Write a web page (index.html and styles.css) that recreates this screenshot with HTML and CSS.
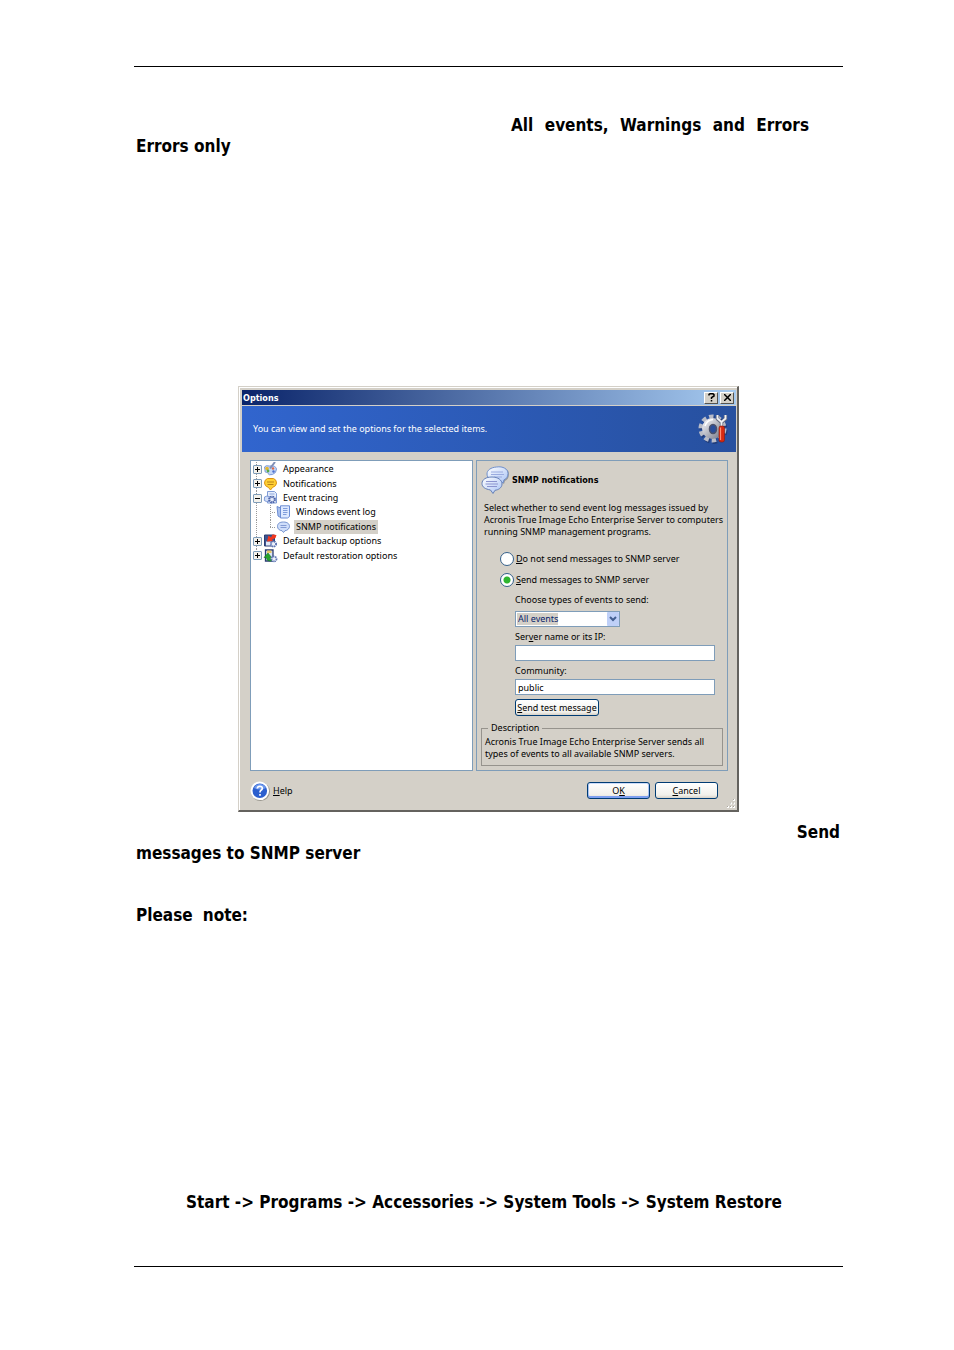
FILE: index.html
```html
<!DOCTYPE html>
<html lang="en">
<head>
<meta charset="utf-8">
<title>Options</title>
<link rel="stylesheet" href="styles.css">
</head>
<body>
<main class="page">
  <section class="intro">
    <p class="line events">All events, Warnings and Errors</p>
    <p class="line">Errors only</p>
  </section>

  <section class="dialog" aria-label="Options">
    <header class="titlebar">
      <h1 class="title">Options</h1>
      <button class="cap" aria-label="What's this?"><svg width="7" height="9" viewBox="0 0 7 9"><path d="M1 2.5V1.5L2 .8H5L6 1.6V3L3.5 4.6V6M3.5 7V8.6" fill="none" stroke="#000" stroke-width="1.5"/></svg></button>
      <button class="cap" aria-label="Close"><svg width="7" height="7" viewBox="0 0 7 7"><path d="M0 0L7 7M7 0L0 7" stroke="#000" stroke-width="1.5"/></svg></button>
    </header>
    <div class="banner">
      <p>You can view and set the options for the selected items.</p>
      <svg width="30" height="32" viewBox="0 0 30 32">
        <defs><linearGradient id="gear" x1="0" y1="0" x2="1" y2="1"><stop offset="0" stop-color="#e6e6ec"/><stop offset="1" stop-color="#858896"/></linearGradient></defs>
        <circle cx="15.500" cy="17" r="11.500" fill="none" stroke="#1c2f61" stroke-width="5" stroke-dasharray="4.300 2.920" opacity=".6"/>
        <circle cx="14.500" cy="15.500" r="11.500" fill="none" stroke="#b9bcc8" stroke-width="5" stroke-dasharray="4.300 2.920"/>
        <circle cx="14.500" cy="15.500" r="7" fill="none" stroke="url(#gear)" stroke-width="7"/>
        <path d="M7 13Q9 7 15 6.500" fill="none" stroke="#fff" stroke-width="1.500"/>
        <ellipse cx="15" cy="16" rx="3.500" ry="4.500" fill="#2a4d9a" stroke="#4d526a" stroke-width="1.500"/>
        <path d="M19.500 2V6L23.500 9.500V14M27.500 2V6L23.500 9.500" fill="none" stroke="#686d80" stroke-width="3.400"/>
        <path d="M19.500 2V5.500L23.500 9V14M27.500 2V5.500L23.500 9" fill="none" stroke="#f1f2f6" stroke-width="1.800"/>
        <rect x="21" y="13" width="5.500" height="16" rx="2" fill="#d72a10" stroke="#8f1608" stroke-width=".6"/>
        <path d="M22.500 14.500V27" stroke="#ff8d72" stroke-width="1.200"/>
      </svg>
    </div>

    <div class="columns">
      <ul class="tree">
        <li class="node"><span class="box plus"></span>
          <svg class="icon" viewBox="0 0 14 14"><path d="M1 5Q2 3 6 4Q12 3 13 7Q13 11 9 12.500Q5 13.500 4.500 11.500Q4.500 10 3 10.500Q1 10.500 1.500 8Z" fill="#c5d7f6" stroke="#7f9bd6"/><circle cx="3.500" cy="6.500" r="1.800" fill="#e6b72d"/><circle cx="4.500" cy="9" r="1.400" fill="#57aa48"/><circle cx="9.500" cy="6.500" r="1.200" fill="#df6542"/><circle cx="10" cy="9.500" r="1.200" fill="#4b6fd0"/><path d="M11.500 0L6.500 6.500" stroke="#7f8fb5" stroke-width="2"/></svg>
          Appearance</li>
        <li class="node"><span class="box plus"></span>
          <svg class="icon" viewBox="0 0 14 14"><path d="M4 1.500H10Q13 2.500 13 6Q13 9 9 10.500L7 13L5 10.500Q1 9 1 6Q1 2.500 4 1.500Z" fill="#ffd034" stroke="#dd9312"/><path d="M3.500 5H10.500M4 7.500H10" stroke="#b98317"/></svg>
          Notifications</li>
        <li class="node"><span class="box"></span>
          <svg class="icon" viewBox="0 0 14 14"><path d="M4 .5H11L13 2.500V12H4Z" fill="#e6eefc" stroke="#7f9bd6"/><path d="M6 3H11" stroke="#91a8dc"/><path d="M1 6Q3 4.500 6 5.500V10Q3 11.500 .8 9.500Z" fill="#cfdcf7" stroke="#7f9bd6"/><circle cx="8.500" cy="8.500" r="2.800" fill="#e3eafa" stroke="#4a62a8" stroke-width="2.200" stroke-dasharray="1.500 .7"/></svg>
          Event tracing</li>
        <li class="node child">
          <svg class="icon" viewBox="0 0 14 14"><path d="M.5 1.500L4 3V12.500L1.500 11Z" fill="#a9c1ef" stroke="#6c8dd3"/><path d="M4 .8H13V11.500L11 13H4Z" fill="#dde9ff" stroke="#6c8dd3"/><path d="M6.500 3.500H11M6.500 5.500H11M6.500 7.500H11M6.500 9.500H10" stroke="#7f9cda"/></svg>
          Windows event log</li>
        <li class="node child last">
          <svg class="icon" viewBox="0 0 14 14"><path d="M7 2C11 2 13 4 13 6.300S11 10.500 8.500 10.700L7 12.500L5.500 10.700C3 10.500 1 9 1 6.300S3 2 7 2Z" fill="#cfdefa" stroke="#7593cf"/><path d="M4 5.500H10M4 7.500H10" stroke="#839bd4"/></svg>
          <span class="selected">SNMP notifications</span></li>
        <li class="node"><span class="box plus"></span>
          <svg class="icon" viewBox="0 0 14 14"><path d="M1 1H11V12H1Z" fill="#3d5490" stroke="#2a3c70"/><path d="M2.500 7.500H8V11.500H2.500Z" fill="#dfe7f6"/><path d="M13 1L9 .5L7.500 3.500L5 1.500L3.500 7.500L9.500 7L8.500 5.500L12 4Z" fill="#f2371d"/><circle cx="10" cy="10" r="2.600" fill="#eef2fb" stroke="#5d74b3" stroke-width="1.900" stroke-dasharray="1.400 .7"/></svg>
          Default backup options</li>
        <li class="node"><span class="box plus"></span>
          <svg class="icon" viewBox="0 0 14 14"><path d="M2 1H9.500V12H2Z" fill="#dce5f5" stroke="#2a3c70" stroke-width="1.300"/><path d="M3.500 1.500H8V4H3.500Z" fill="#e9c865"/><path d="M8 12Q3 12.500 3 8.500H.5L4.500 4L8 8.500H6Q6 10 8 10Z" fill="#25a72b" stroke="#14721b" stroke-width=".6"/><circle cx="10.500" cy="10" r="2.500" fill="#eef2fb" stroke="#5d74b3" stroke-width="1.800" stroke-dasharray="1.400 .7"/></svg>
          Default restoration options</li>
      </ul>

      <form class="panel">
        <div class="heading">
          <svg width="29" height="28" viewBox="0 0 29 28">
            <defs><linearGradient id="bub" x1="0" y1="0" x2="1" y2="1"><stop offset="0" stop-color="#fff"/><stop offset="1" stop-color="#a9c3f5"/></linearGradient></defs>
            <path d="M16 2.500C22 .5 28 3 28 8C28 12 26 14 24 15L23 18L19 15C12 16 7 14 6.500 9C6.500 5 10 2.500 16 2.500Z" fill="#59616f" opacity=".5"/>
            <path d="M15.500 1C22 0 27 3 27 7.500C27 11 25 13 23 13.800L22 17L18.500 14.500C11 15.500 6 12.500 6 8C6 4 10 1.500 15.500 1Z" fill="url(#bub)" stroke="#6f8fcc"/>
            <path d="M10 6H22M10 8.500H23M13 11H21" stroke="#9aabdf"/>
            <path d="M11 11C17 11 21 14 21 18C21 22 17 24 14 24.300L12 27.500L9.500 24C4 23 1 21 1 17.500C1 13.500 5 11 11 11Z" fill="url(#bub)" stroke="#6580b7"/>
            <path d="M5 15.500H16M4.500 18H17M6 20.500H16" stroke="#8c94cf"/>
          </svg>
          <h2 class="title">SNMP notifications</h2>
        </div>
        <p class="lead">Select whether to send event log messages issued by<br>Acronis True Image Echo Enterprise Server to computers<br>running SNMP management programs.</p>
        <label class="choice"><input type="radio" name="send"><span><u>D</u>o not send messages to SNMP server</span></label>
        <label class="choice"><input type="radio" name="send" checked><span><u>S</u>end messages to SNMP server</span></label>
        <div class="fields">
          <label class="caption" for="types">Choose types of events to send:</label>
          <div class="combo">
            <select id="types"><option>All events</option><option>Warnings and Errors</option><option>Errors only</option></select>
            <svg class="arrow" width="12" height="14" viewBox="0 0 12 14"><rect width="12" height="14" rx="1" fill="#bfd0f8"/><path d="M3 5L6 8L9 5" fill="none" stroke="#435f91" stroke-width="2"/></svg>
          </div>
          <label class="caption" for="server">Ser<u>v</u>er name or its IP:</label>
          <input class="text" id="server" type="text">
          <label class="caption" for="community">Community:</label>
          <input class="text" id="community" type="text" value="public">
          <button class="btn test" type="button"><span><u>S</u>end test message</span></button>
        </div>
        <fieldset class="description">
          <legend>Description</legend>
          <p>Acronis True Image Echo Enterprise Server sends all<br>types of events to all available SNMP servers.</p>
        </fieldset>
      </form>
    </div>

    <footer class="actions">
      <a class="help" href="#help">
        <svg width="20" height="20" viewBox="0 0 20 20"><circle cx="10.500" cy="10.500" r="9.500" fill="#9b9890"/><circle cx="9.800" cy="9.800" r="9.300" fill="#fff"/><circle cx="9.800" cy="9.800" r="7.300" fill="#2c5fce"/><path d="M4 7Q6 3 10 3Q14 3 16 7Q10 10 4 7Z" fill="#6d98ec"/><path d="M7.300 7.500Q7.500 5.300 9.800 5.300Q12.500 5.300 12.300 7.300Q12.200 8.500 11 9.300Q10 10 10 11.500M10 13V14.800" fill="none" stroke="#fff" stroke-width="1.700"/></svg>
        <span><u>H</u>elp</span></a>
      <button class="btn ok" type="button"><span>O<u>K</u></span></button>
      <button class="btn" type="button"><span><u>C</u>ancel</span></button>
      <svg class="grip" width="9" height="9" viewBox="0 0 9 9"><path d="M7 0h2v2H7zM4 3.500h2v2H4zM7 3.500h2v2H7zM1 7h2v2H1zM4 7h2v2H4zM7 7h2v2H7z" fill="#fff"/><path d="M7 0h1v1H7zM4 3.500h1v1H4zM7 3.500h1v1H7zM1 7h1v1H1zM4 7h1v1H4zM7 7h1v1H7z" fill="#aaa69d"/></svg>
    </footer>
  </section>

  <section class="notes">
    <p class="line end">Send</p>
    <p class="line">messages to SNMP server</p>
    <p class="line note">Please note:</p>
    <p class="line path">Start -&gt; Programs -&gt; Accessories -&gt; System Tools -&gt; System Restore</p>
  </section>
</main>
</body>
</html>
```
FILE: styles.css
```css
* { box-sizing: border-box; }
body { margin: 0; background: #fff; color: #000; }
p, h1, h2, ul { margin: 0; padding: 0; }
.page {
  margin: 66px 111px 83px 134px;
  border-top: 1px solid #000;
  border-bottom: 1px solid #000;
  font-family: "Noto Sans", sans-serif;
}
.line { font: 700 17px/21px "DejaVu Sans Condensed", "DejaVu Sans", sans-serif; }
.intro { padding: 48px 3px 0 2px; }
.events { width: 298px; margin-left: auto; margin-right: 31px; text-align: justify; text-align-last: justify; white-space: nowrap; }
.notes { padding: 10px 3px 53px 2px; }
.end { text-align: right; }
.note { width: 112px; margin-top: 41px; text-align-last: justify; white-space: nowrap; }
.path { margin-top: 266px; padding-left: 50px; }

.dialog {
  max-width: 501px;
  margin: 229px auto 0;
  border: 1px solid #d4d0c8;
  border-right: 2px solid #64625e;
  border-bottom: 2px solid #64625e;
  background: #d4d0c8;
  box-shadow: inset 1px 1px #fff;
  padding: 3px 1px 0 3px;
  font-size: 9px;
  line-height: 12px;
}
.dialog button, .dialog input, .dialog select { font: inherit; color: #000; }
.title { font: 700 9px/12px "DejaVu Sans Condensed", "DejaVu Sans", sans-serif; }
.titlebar {
  display: flex;
  align-items: center;
  gap: 2px;
  height: 15px;
  padding: 0 2px 0 1px;
  background: linear-gradient(90deg, #0a246a, #a6caf0);
  color: #fff;
}
.titlebar .title { flex: 1; }
.cap {
  display: grid;
  place-items: center;
  width: 14px;
  height: 12px;
  padding: 0;
  background: #d4d0c8;
  border: 1px solid;
  border-color: #fff #55534f #55534f #fff;
}
.banner {
  display: flex;
  align-items: center;
  justify-content: space-between;
  height: 47px;
  margin-top: 1px;
  border-bottom: 1px solid #d4d0c8;
  padding: 0 8px 0 11px;
  background: linear-gradient(90deg, #3165ce, #27509f);
  color: #fff;
}
.columns { display: grid; grid-template-columns: 223fr 252fr; gap: 3px; padding: 7px 8px 0; }
.tree {
  list-style: none;
  background: #fff;
  border: 1px solid #7f9db9;
  padding: 1px 2px 207px;
  display: grid;
  grid-template-rows: repeat(7, 1fr);
}
.node { display: flex; align-items: center; gap: 1px; background: repeating-linear-gradient(#999 0 1px, #fff 1px 2px) 3px 0 / 1px 100% no-repeat; }
.node:last-child { background-size: 1px 50%; }
.icon { width: 15px; height: 14px; margin-right: 4px; flex: none; }
.box {
  width: 9px;
  height: 9px;
  flex: none;
  border: 1px solid #7f9db9;
  border-radius: 1px;
  background: linear-gradient(#000, #000) center / 5px 1px no-repeat, #f4f2ec;
}
.plus { background: linear-gradient(#000, #000) center / 5px 1px no-repeat, linear-gradient(#000, #000) center / 1px 5px no-repeat, #f4f2ec; }
.child { padding-left: 23px; background: repeating-linear-gradient(#999 0 1px, #fff 1px 2px) 3px 0 / 1px 100% no-repeat, repeating-linear-gradient(#999 0 1px, #fff 1px 2px) 17px 0 / 1px 100% no-repeat, repeating-linear-gradient(90deg, #999 0 1px, #fff 1px 2px) 17px 7px / 6px 1px no-repeat; }
.last { background-size: 1px 100%, 1px 50%, 6px 1px; }
.selected { background: #d4d0c8; padding: 1px 2px; margin-left: -2px; }

.panel { border: 1px solid #7f9db9; padding: 5px 4px 4px; }
.heading { display: flex; align-items: center; gap: 2px; }
.lead { padding: 8px 0 0 3px; white-space: nowrap; }
.choice { display: flex; align-items: center; gap: 2px; height: 14px; margin: 14px 0 0 19px; }
.choice + .choice { margin-top: 7px; }
.choice input {
  appearance: none;
  width: 14px;
  height: 14px;
  margin: 0;
  border: 1px solid #34608b;
  border-radius: 50%;
  background: #fff;
}
.choice input:checked { background: radial-gradient(circle, #2fb52f 0 3px, #fff 4px); }
.fields { display: flex; flex-direction: column; align-items: flex-start; padding: 7px 8px 0 34px; }
.caption { height: 12px; margin: 0 0 5px; }
.text, .combo select { border: 1px solid #7f9db9; border-radius: 0; background: #fff; height: 16px; padding: 0 2px; margin: 0; }
.text { width: 100%; margin-bottom: 4px; }
.text + .caption, .combo + .caption { margin-bottom: 2px; }
.combo { display: grid; width: 105px; margin-bottom: 4px; }
.combo > * { grid-area: 1 / 1; }
.dialog .combo select { appearance: none; color: #0a246a; background: linear-gradient(#d4d0c8, #d4d0c8) 1px 1px / 41px 12px no-repeat, #fff; }
.arrow { justify-self: end; align-self: center; margin-right: 1px; pointer-events: none; }
.btn {
  width: 63px;
  height: 17px;
  padding: 0;
  border: 1px solid #003c74;
  border-radius: 3px;
  background: linear-gradient(#fff, #f1f0eb 80%, #d8d2c8);
  white-space: nowrap;
}
.test { width: 84px; }
.ok { box-shadow: inset 0 1px #ccdcfa, inset 0 -2px #7d9ff0, inset 1px 0 #a9c2f2, inset -1px 0 #a9c2f2; }
.description { border: 1px solid #96938d; margin: 6px 0 0; padding: 2px 3px 5px; min-width: 0; white-space: nowrap; }
.description legend { margin-left: 3px; padding: 0 3px; line-height: 12px; }
.actions { display: flex; align-items: center; gap: 5px; height: 39px; padding-left: 8px; }
.help { display: flex; align-items: center; gap: 3px; margin-right: auto; color: #000; text-decoration: none; }
.grip { align-self: flex-end; margin: 0 1px 2px 3px; }
```
